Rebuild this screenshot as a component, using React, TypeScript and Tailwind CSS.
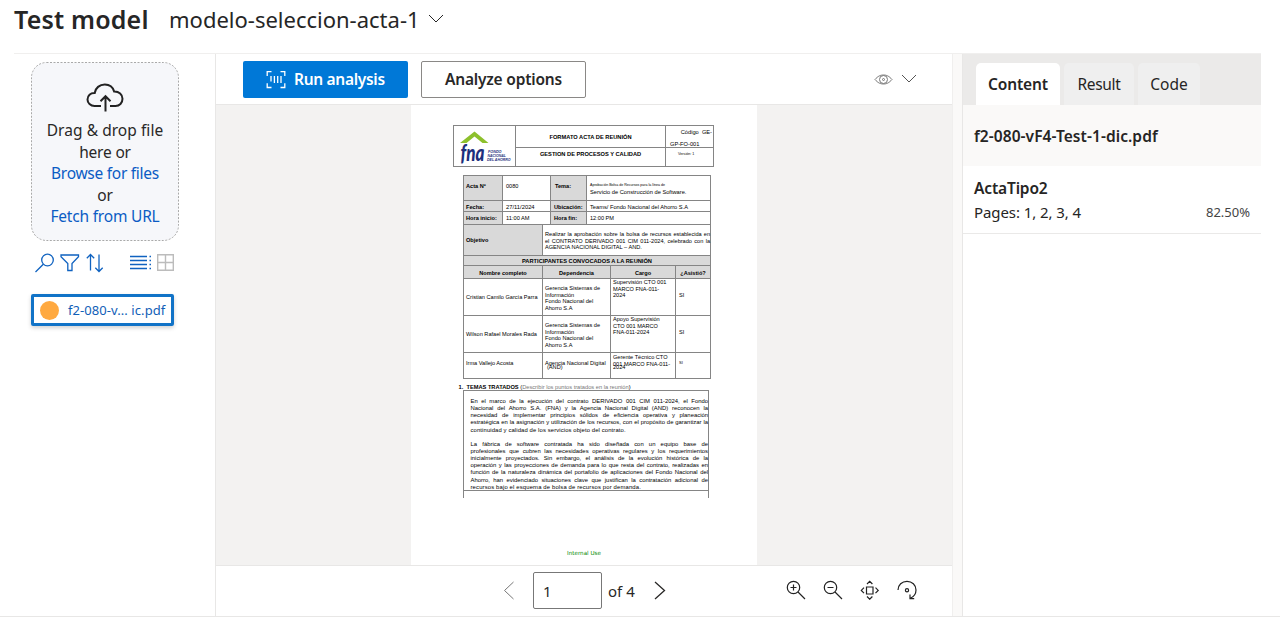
import type { ReactNode } from "react";

function Chevron({ className, d = "M1 1l7 7 7-7", box = "0 0 16 9" }: { className: string; d?: string; box?: string }) {
  return (
    <svg className={className} viewBox={box} fill="none" stroke="currentColor">
      <path d={d} />
    </svg>
  );
}

function Header() {
  return (
    <header className="ml-[14px] mr-[19px] flex h-[54px] items-start border-b border-[#f0efee] text-[#262626]">
      <h1 className="mt-[1px] w-[155px] text-[25px] leading-[36px] font-semibold tracking-[0.18px] whitespace-nowrap">Test model</h1>
      <div className="mt-[1px] w-[259px] text-[22px] leading-[36px] whitespace-nowrap">modelo-seleccion-acta-1</div>
      <Chevron className="mt-[14px] h-[9px] w-[16px]" />
    </header>
  );
}

function DropZone() {
  return (
    <div className="relative flex h-[179px] w-[148px] flex-col items-center text-[15.5px] leading-[21.6px] tracking-[-0.2px] whitespace-nowrap text-[#292827]">
      <svg className="absolute inset-0" width="148" height="179" fill="none">
        <rect x="0.5" y="0.5" width="147" height="178" rx="15" fill="#f6f7fa" stroke="#a9a9a9" strokeDasharray="2 1.5" />
      </svg>
      <svg className="relative mt-[21px] h-[29px] w-[38px]" viewBox="0 0 38 29" fill="none" stroke="#222" strokeWidth="2">
        <path d="M15 23H8.500C4.500 23 1.500 20 1.500 16.500C1.500 12.500 4.500 9.800 8.700 10C9.500 5 13.500 1.500 18.800 1.500C23.500 1.500 27 4.500 28.200 8.600C33 8.500 36.500 11.500 36.500 15.800C36.500 20 33.500 23 29.500 23H24" />
        <path d="M19.500 28.500V13.500M14.500 18.200l5-5 5 5" />
      </svg>
      <div className="relative mt-[8px] text-center">
        <div className="tracking-[0.05px]">Drag &amp; drop file</div>
        <div>here or</div>
        <div className="tracking-[-0.27px] text-[#0b5cc4]">Browse for files</div>
        <div>or</div>
        <div className="text-[#0b5cc4]">Fetch from URL</div>
      </div>
    </div>
  );
}

function FileTools() {
  return (
    <div className="mt-[12px] flex h-[20px] w-[143px] text-[#0f62c0]">
      <svg className="ml-[4px] h-[20px] w-[20px]" viewBox="0 0 20 20" fill="none" stroke="currentColor" strokeWidth="1.300">
        <circle cx="12.500" cy="7" r="5.800" />
        <path d="M8.300 11.200L.5 19" />
      </svg>
      <svg className="ml-[5px] h-[20px] w-[20px]" viewBox="0 0 20 20" fill="none" stroke="currentColor" strokeWidth="1.300">
        <path d="M1 2h17.500v1.800L12 10.500V17.500H7.800V10.500L1 3.800z" />
      </svg>
      <svg className="ml-[6px] h-[20px] w-[18px]" viewBox="0 0 18 20" fill="none" stroke="currentColor" strokeWidth="1.300">
        <path d="M4.500 17.500V1.500M.8 5.200l3.700-3.700 3.700 3.700M13 1.500v17M9.300 14.800l3.700 3.700 3.700-3.700" />
      </svg>
      <svg className="ml-[26px] h-[20px] w-[22px]" viewBox="0 0 22 20" fill="none" stroke="currentColor" strokeWidth="1.300">
        <path d="M0 3.500h17M0 7.500h17M0 11.500h17M0 15.500h17M19.500 3.500h1.500M19.500 7.500h1.500M19.500 11.500h1.500M19.500 15.500h1.500" />
      </svg>
      <svg className="ml-[5px] h-[20px] w-[17px]" viewBox="0 0 17 20" fill="none" stroke="#bcbcbc" strokeWidth="1.400">
        <path d="M.7 1.700h15.600v15.600H.7zM8.500 1.700v15.600M.7 9.500h15.600" />
      </svg>
    </div>
  );
}

function FilePanel() {
  return (
    <aside className="w-[216px] border-r border-[#e8e7e6] pt-[8px] pl-[31px]">
      <DropZone />
      <FileTools />
      <div className="mt-[21px] flex h-[32px] w-[143px] items-center rounded-[2px] border-[3px] border-[#1173c7] pl-[6px] shadow-[0_2px_4px_rgba(0,0,0,0.18)]">
        <span className="h-[19px] w-[19px] rounded-full bg-[#ffa940]" />
        <span className="mt-[1px] ml-[9px] text-[13px] tracking-[0.07px] whitespace-nowrap text-[#1160b7]">f2-080-v... ic.pdf</span>
      </div>
    </aside>
  );
}

function FnaLogo() {
  return (
    <svg className="h-[36px] w-[54px] overflow-visible" viewBox="0 0 54 36">
      <path d="M0 16L14.500 4.500l14 11.500H22.500L14.500 9.500 6.500 16z" fill="#8dc02c" />
      <text x="0.500" y="34" textLength="24" lengthAdjust="spacingAndGlyphs" fontFamily="Lato, sans-serif" fontWeight="900" fontStyle="italic" fontSize="22" fill="#1d2f7c">fna</text>
      <g fontFamily="Liberation Sans, sans-serif" fontWeight="bold" fontStyle="italic" fontSize="4.200" fill="#1d2f7c">
        <text x="28" y="25.500" textLength="13.500" lengthAdjust="spacingAndGlyphs">FONDO</text>
        <text x="27.500" y="29.900" textLength="18.500" lengthAdjust="spacingAndGlyphs">NACIONAL</text>
        <text x="27" y="34.300" textLength="23.500" lengthAdjust="spacingAndGlyphs">DEL AHORRO</text>
      </g>
    </svg>
  );
}

function Cell({ className, children }: { className: string; children?: ReactNode }) {
  return <div className={`shrink-0 border-r border-b border-[#858585] whitespace-nowrap ${className}`}>{children}</div>;
}

const people = [
  {
    name: "Cristian Camilo García Parra",
    dep: ["Gerencia Sistemas de", "Información", "Fondo Nacional del", "Ahorro S.A"],
    role: ["Supervisión CTO 001", "MARCO FNA-011-", "2024"],
  },
  {
    name: "Wilson Rafael Morales Rada",
    dep: ["Gerencia Sistemas de", "Información", "Fondo Nacional del", "Ahorro S.A"],
    role: ["Apoyo Supervisión", "CTO 001 MARCO", "FNA-011-2024"],
  },
];

const first = [
  "En el marco de la ejecución del contrato DERIVADO 001 CIM 011-2024, el Fondo",
  "Nacional del Ahorro S.A. (FNA) y la Agencia Nacional Digital (AND) reconocen la",
  "necesidad de implementar principios sólidos de eficiencia operativa y planeación",
  "estratégica en la asignación y utilización de los recursos, con el propósito de garantizar la",
];
const second = [
  "La fábrica de software contratada ha sido diseñada con un equipo base de",
  "profesionales que cubren las necesidades operativas regulares y los requerimientos",
  "inicialmente proyectados. Sin embargo, el análisis de la evolución histórica de la",
  "operación y las proyecciones de demanda para lo que resta del contrato, realizadas en",
  "función de la naturaleza dinámica del portafolio de aplicaciones del Fondo Nacional del",
  "Ahorro, han evidenciado situaciones clave que justifican la contratación adicional de",
];

function Justified({ lines }: { lines: string[] }) {
  return (
    <>
      {lines.map((l) => (
        <div key={l} className="whitespace-nowrap [text-align-last:justify]">{l}</div>
      ))}
    </>
  );
}

function DocumentPage() {
  return (
    <div className="h-[460px] w-[346px] bg-white pt-[20px] font-['Liberation_Sans',Arial,sans-serif] text-[5.6px] leading-[6.5px] text-black">
      <div className="ml-[42px] flex h-[42px] w-[261px] border-t border-l border-[#858585]">
        <Cell className="h-[41px] w-[62px] pt-[1px] pl-[6px]"><FnaLogo /></Cell>
        <div className="w-[150px] text-center font-bold">
          <Cell className="h-[22px] text-[5.7px] leading-[22px]">FORMATO ACTA DE REUNIÓN</Cell>
          <Cell className="h-[19px] text-[5.7px] leading-[13px]">GESTION DE PROCESOS Y CALIDAD</Cell>
        </div>
        <div className="w-[48px]">
          <Cell className="h-[22px] pr-[1px] pl-[4px] text-[5.7px] leading-[11.5px]">
            <div className="pt-[1px] text-right">Código&nbsp; GE-</div>
            <div>GP-FO-001</div>
          </Cell>
          <Cell className="h-[19px] pl-[12px] text-[3.7px] leading-[13px]">Versión: 1</Cell>
        </div>
      </div>

      <div className="mt-[8px] ml-[52px] w-[248px] border-t border-l border-[#858585]">
        <div className="flex h-[25px]">
          <Cell className="w-[39px] bg-[#d9d9d9] pt-[7px] pl-[2px] font-bold">Acta Nº</Cell>
          <Cell className="w-[48px] pt-[7px] pl-[3px]">0080</Cell>
          <Cell className="w-[36px] bg-[#d9d9d9] pt-[7px] pl-[4px] font-bold">Tema:</Cell>
          <Cell className="w-[124px] pt-[6px] pl-[3px]">
            <div className="text-[3.6px] leading-[6px]">Aprobación Bolsa de Recursos para la línea de</div>
            <div className="text-[5.7px] leading-[9px]">Servicio de Construcción de Software.</div>
          </Cell>
        </div>
        <div className="flex h-[11px] leading-[13px]">
          <Cell className="w-[39px] bg-[#d9d9d9] pl-[2px] font-bold">Fecha:</Cell>
          <Cell className="w-[48px] pl-[3px] text-[5.8px]">27/11/2024</Cell>
          <Cell className="w-[36px] bg-[#d9d9d9] pl-[3px] font-bold">Ubicación:</Cell>
          <Cell className="w-[124px] pl-[3px] text-[5.7px]">Teams/ Fondo Nacional del Ahorro S.A</Cell>
        </div>
        <div className="flex h-[13px] leading-[13px]">
          <Cell className="w-[39px] bg-[#d9d9d9] pl-[2px] font-bold">Hora inicio:</Cell>
          <Cell className="w-[48px] pl-[3px] text-[5.7px]">11:00 AM</Cell>
          <Cell className="w-[36px] bg-[#d9d9d9] pl-[3px] font-bold">Hora fin:</Cell>
          <Cell className="w-[124px] pl-[3px]">12:00 PM</Cell>
        </div>
        <div className="flex h-[31px]">
          <Cell className="w-[79px] bg-[#d9d9d9] pl-[2px] leading-[31px] font-bold">Objetivo</Cell>
          <Cell className="w-[168px] pt-[6px] pl-[2px]">
            <div className="[text-align-last:justify]">Realizar la aprobación sobre la bolsa de recursos establecida en</div>
            <div className="[text-align-last:justify]">el CONTRATO DERIVADO 001 CIM 011-2024, celebrado con la</div>
            <div>AGENCIA NACIONAL DIGITAL – AND.</div>
          </Cell>
        </div>
        <Cell className="h-[10px] bg-[#d9d9d9] text-center text-[5.7px] leading-[11px] font-bold">PARTICIPANTES CONVOCADOS A LA REUNIÓN</Cell>
        <div className="flex h-[13px] text-center leading-[14px] font-bold">
          <Cell className="w-[79px] bg-[#d9d9d9]">Nombre completo</Cell>
          <Cell className="w-[68px] bg-[#d9d9d9]">Dependencia</Cell>
          <Cell className="w-[65px] bg-[#d9d9d9]">Cargo</Cell>
          <Cell className="w-[35px] bg-[#d9d9d9]">¿Asistió?</Cell>
        </div>
        {people.map((p) => (
          <div key={p.name} className="flex h-[37px]">
            <Cell className="w-[79px] pl-[2px] leading-[36px]">{p.name}</Cell>
            <Cell className="w-[68px] pt-[6px] pl-[2px]">{p.dep.map((l) => <div key={l}>{l}</div>)}</Cell>
            <Cell className="w-[65px] pl-[2px]">{p.role.map((l) => <div key={l}>{l}</div>)}</Cell>
            <Cell className="w-[35px] pl-[3px] leading-[33px]">SI</Cell>
          </div>
        ))}
        <div className="flex h-[26px]">
          <Cell className="w-[79px] pl-[2px] leading-[21px]">Irma Vallejo Acosta</Cell>
          <Cell className="w-[68px] pt-[8px] pl-[2px] leading-[4px]">
            <div>Agencia Nacional Digital</div>
            <div className="pl-[2px]">(AND)</div>
          </Cell>
          <Cell className="w-[65px] pt-[1px] pl-[2px]">
            <div>Gerente Técnico CTO</div>
            <div>001 MARCO FNA-011-</div>
            <div className="leading-[1px]">2024</div>
          </Cell>
          <Cell className="w-[35px] pl-[3px] text-[4px] leading-[20px]">SI</Cell>
        </div>
      </div>

      <div className="mt-[5px] ml-[47.500px] h-[6px] text-[5.7px] leading-[7px] whitespace-nowrap">
        <b>1.&nbsp; TEMAS TRATADOS</b> (<span className="text-[#777]">Describir los puntos tratados en la reunión</span>)
      </div>
      <div className="ml-[52px] h-[108px] w-[246px] border-x border-t border-[#858585]">
        <div className="h-[100px] border-b border-[#858585] pt-[7px] pl-[6.500px] text-[5.9px] leading-[7.14px] whitespace-nowrap">
          <Justified lines={first} />
          <div className="mb-[7.14px] tracking-[0.11px]">continuidad y calidad de los servicios objeto del contrato.</div>
          <Justified lines={second} />
          <div className="tracking-[0.15px]">recursos bajo el esquema de bolsa de recursos por demanda.</div>
        </div>
      </div>
      <div className="mt-[51px] text-center font-['DejaVu_Sans',sans-serif] text-[5.6px] leading-[8px] text-[#008a00]">Internal Use</div>
    </div>
  );
}

function Toolbar() {
  return (
    <div className="flex h-[51px] items-start border-b border-[#e8e7e6] pt-[7px] pl-[27px] text-[15.5px] font-semibold">
      <button className="flex h-[37px] w-[165px] items-center rounded-[2px] bg-[#0078d7] pl-[23px] text-white">
        <svg className="h-[20px] w-[20px]" viewBox="0 0 20 20" fill="none" stroke="currentColor" strokeWidth="1.300">
          <path d="M5.500 1.700H1.200V6M14.500 1.700h4.300V6M5.500 17.500H1.200v-4.300M14.500 17.500h4.300v-4.300M5 6v5.500M8.400 6v7M11.700 6v7M15 6v7" />
        </svg>
        <span className="ml-[8px] tracking-[-0.3px] whitespace-nowrap">Run analysis</span>
      </button>
      <button className="ml-[13px] h-[37px] w-[165px] rounded-[2px] border border-[#8a8886] text-center tracking-[-0.2px] whitespace-nowrap text-[#292827]">Analyze options</button>
      <svg className="mt-[13px] ml-[288px] h-[11px] w-[19px] text-[#777]" viewBox="0 0 19 11" fill="none" stroke="currentColor">
        <path d="M1 5.500C4 2 6.500 1 9.500 1s5.500 1 8.500 4.500C15 9 12.500 10 9.500 10S4 9 1 5.500z" />
        <circle cx="9.500" cy="5.500" r="4" />
        <circle cx="9.500" cy="5.500" r="1" />
      </svg>
      <Chevron className="mt-[13px] ml-[8px] h-[9px] w-[16px] text-[#555]" />
    </div>
  );
}

function Pager() {
  return (
    <div className="flex h-[51px] items-start border-t border-[#e8e7e6] pt-[6px] text-[15px] text-[#292827]">
      <Chevron className="mt-[9px] ml-[287px] h-[19px] w-[12px] text-[#777]" box="0 0 12 19" d="M10.500 1L1.500 9.500l9 8.500" />
      <div className="ml-[18px] h-[37px] w-[69px] rounded-[2px] border border-[#777] pl-[9px] leading-[37px]">1</div>
      <div className="ml-[6px] w-[40px] leading-[39px] whitespace-nowrap">of 4</div>
      <Chevron className="mt-[9px] ml-[6px] h-[19px] w-[12px] stroke-[1.3]" box="0 0 12 19" d="M1 1l9.500 8.500L1 18" />
      <div className="mt-[8px] ml-[120px] flex text-[#222]">
        <svg className="h-[20px] w-[20px]" viewBox="0 0 20 20" fill="none" stroke="currentColor" strokeWidth="1.200">
          <circle cx="7.500" cy="7.500" r="6.200" />
          <path d="M12 12l7 7M4.500 7.500h6M7.500 4.500v6" />
        </svg>
        <svg className="ml-[17px] h-[20px] w-[20px]" viewBox="0 0 20 20" fill="none" stroke="currentColor" strokeWidth="1.200">
          <circle cx="7.500" cy="7.500" r="6.200" />
          <path d="M12 12l7 7M4.500 7.500h6" />
        </svg>
        <svg className="ml-[17px] h-[20px] w-[20px]" viewBox="0 0 20 20" fill="none" stroke="currentColor" strokeWidth="1.200">
          <path d="M6.500 7h6.500v7H6.500zM7 4l2.700-2.700L12.400 4M7 16.500l2.700 2.700 2.700-2.700M4 7.700L1.300 10.400 4 13.100M15.500 7.700l2.700 2.700-2.700 2.700" />
        </svg>
        <svg className="ml-[17px] h-[20px] w-[20px]" viewBox="0 0 20 20" fill="none" stroke="currentColor" strokeWidth="1.200">
          <path d="M1 10C1 5 5 1.300 10 1.300S19 5 19 10c0 4-2.500 7-6 8.500M13 14.500v4.200h4.200" />
          <circle cx="10" cy="10.300" r="1.600" />
        </svg>
      </div>
    </div>
  );
}

function ResultPanel() {
  return (
    <section className="w-[299px] border-l border-[#e8e7e6] text-[#262524]">
      <div className="flex h-[51px] items-end bg-[#ebeae9] pl-[13px] text-center text-[15.5px] leading-[42px] whitespace-nowrap">
        <div className="h-[42px] w-[84px] rounded-t-[5px] bg-white font-semibold tracking-[-0.15px]">Content</div>
        <div className="ml-[4px] h-[42px] w-[70px] rounded-t-[5px] bg-[#efefef] tracking-[-0.3px]">Result</div>
        <div className="ml-[4px] h-[42px] w-[62px] rounded-t-[5px] bg-[#efefef]">Code</div>
      </div>
      <div className="h-[61px] bg-[#faf9f8] pl-[11px] text-[15.5px] leading-[62px] font-semibold tracking-[0.07px] whitespace-nowrap">f2-080-vF4-Test-1-dic.pdf</div>
      <div className="h-[68px] border-b border-[#eae9e8] pt-[10px] pl-[11px]">
        <div className="text-[15.5px] leading-[25px] font-semibold tracking-[-0.15px]">ActaTipo2</div>
        <div className="flex justify-between pr-[11px] leading-[22px]">
          <span className="text-[15px] tracking-[-0.08px]">Pages: 1, 2, 3, 4</span>
          <span className="text-[13px] text-[#444]">82.50%</span>
        </div>
      </div>
    </section>
  );
}

export default function App() {
  return (
    <div className="h-[618px] w-[1280px] overflow-hidden bg-white font-['Noto_Sans','Open_Sans',sans-serif]">
      <Header />
      <div className="flex h-[563px] border-b border-[#e8e7e6]">
        <FilePanel />
        <main className="w-[736px]">
          <Toolbar />
          <div className="flex h-[460px] justify-center bg-[#f3f2f1]">
            <DocumentPage />
          </div>
          <Pager />
        </main>
        <div className="w-[10px] border-l border-[#f0efee] bg-[#faf9f8]" />
        <ResultPanel />
      </div>
    </div>
  );
}
